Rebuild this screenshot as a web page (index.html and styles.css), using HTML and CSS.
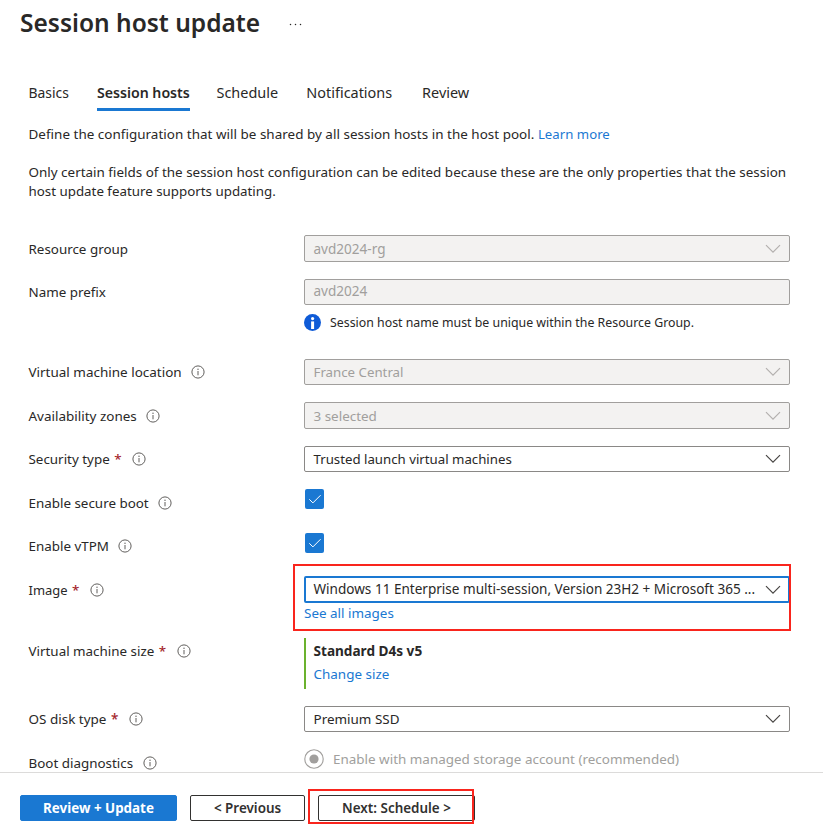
FILE: index.html
```
<!DOCTYPE html>
<html lang="en">
<head>
<meta charset="utf-8">
<title>Session host update</title>
<link rel="stylesheet" href="styles.css">
</head>
<body>
<svg class="defs" width="0" height="0" aria-hidden="true">
  <symbol id="info" viewBox="0 0 14 14"><circle cx="7" cy="7" r="6.1" fill="none" stroke="#605e5c" stroke-width="1"/><path d="M7 6v4.3" stroke="#605e5c" stroke-width="1"/><circle cx="7" cy="4.2" r=".7" fill="#605e5c"/></symbol>
  <symbol id="chevron" viewBox="0 0 16 10"><path d="M1 1.2l7 7 7-7" fill="none" stroke="currentColor" stroke-width="1.2"/></symbol>
  <symbol id="check" viewBox="0 0 19 20"><path d="M4.3 10.3l3.6 3.6 7.7-7.7" fill="none" stroke="#fff" stroke-width="1"/></symbol>
</svg>
<div class="page">
  <header class="header">
    <h1 class="title">Session host update</h1>
    <svg class="more" width="13" height="3" viewBox="0 0 13 3"><circle cx="1.5" cy="1.5" r=".75"/><circle cx="6.5" cy="1.5" r=".75"/><circle cx="11.5" cy="1.5" r=".75"/></svg>
  </header>
  <main class="content">
    <nav class="tabs">
      <span class="tab tab-basics">Basics</span>
      <span class="tab tab-active">Session hosts</span>
      <span class="tab">Schedule</span>
      <span class="tab">Notifications</span>
      <span class="tab tab-review">Review</span>
    </nav>
    <p class="intro">Define the configuration that will be shared by all session hosts in the host pool. <a class="link">Learn more</a></p>
    <p class="note">Only certain fields of the session host configuration can be edited because these are the only properties that the session<br><span class="note-end">host update feature supports updating.</span></p>

    <div class="form">
      <div class="row row-group">
        <div class="label drop">Resource group</div>
        <div class="select tall disabled"><span class="value w-rg">avd2024-rg</span><svg class="chevron"><use href="#chevron"/></svg></div>
      </div>
      <div class="row row-prefix">
        <div class="label">Name prefix</div>
        <div>
          <div class="select disabled input"><span class="value w-rg">avd2024</span></div>
          <div class="hint">
            <svg width="17" height="17" viewBox="0 0 17 17"><circle cx="8.5" cy="8.5" r="8.5" fill="#0f5bd7"/><circle cx="8.6" cy="4.6" r="1.6" fill="#fff"/><path d="M7.1 7.4h3v7.6h-3z" fill="#fff"/></svg>
            <span>Session host name must be unique within the Resource Group.</span>
          </div>
        </div>
      </div>
      <div class="row row-location">
        <div class="label w-loc">Virtual machine location<svg class="info"><use href="#info"/></svg></div>
        <div class="select disabled"><span class="value w-fr">France Central</span><svg class="chevron"><use href="#chevron"/></svg></div>
      </div>
      <div class="row row-zones">
        <div class="label drop w-loc">Availability zones<svg class="info"><use href="#info"/></svg></div>
        <div class="select tall disabled"><span class="value">3 selected</span><svg class="chevron"><use href="#chevron"/></svg></div>
      </div>
      <div class="row row-security">
        <div class="label">Security type<b class="req">*</b><svg class="info"><use href="#info"/></svg></div>
        <div class="select"><span class="value w-launch">Trusted launch virtual machines</span><svg class="chevron"><use href="#chevron"/></svg></div>
      </div>
      <div class="row row-boot">
        <div class="label drop">Enable secure boot<svg class="info"><use href="#info"/></svg></div>
        <svg class="checkbox"><use href="#check"/></svg>
      </div>
      <div class="row row-vtpm">
        <div class="label">Enable vTPM<svg class="info"><use href="#info"/></svg></div>
        <svg class="checkbox"><use href="#check"/></svg>
      </div>
      <div class="row row-image">
        <div class="label drop"><span class="w-image">Image</span><b class="req">*</b><svg class="info"><use href="#info"/></svg></div>
        <div class="image-field">
          <div class="select tall focused"><span class="value w-win">Windows 11 Enterprise multi-session, Version 23H2 + Microsoft 365 ...</span><svg class="chevron"><use href="#chevron"/></svg></div>
          <a class="link see-all">See all images</a>
          <div class="mark mark-image"></div>
        </div>
      </div>
      <div class="row row-size">
        <div class="label">Virtual machine size<b class="req">*</b><svg class="info"><use href="#info"/></svg></div>
        <div class="size">
          <strong class="size-name">Standard D4s v5</strong>
          <a class="link">Change size</a>
        </div>
      </div>
      <div class="row row-disk">
        <div class="label w-disk">OS disk type<b class="req">*</b><svg class="info"><use href="#info"/></svg></div>
        <div class="select"><span class="value">Premium SSD</span><svg class="chevron"><use href="#chevron"/></svg></div>
      </div>
      <div class="row row-diag">
        <div class="label drop">Boot diagnostics<svg class="info"><use href="#info"/></svg></div>
        <div class="radio">
          <svg width="20" height="20" viewBox="0 0 20 20"><circle cx="10" cy="10" r="9.2" fill="none" stroke="#a19f9d" stroke-width="1.1"/><circle cx="10" cy="10" r="4.6" fill="#a19f9d"/></svg>
          <span>Enable with managed storage account (recommended)</span>
        </div>
      </div>
    </div>
  </main>
  <footer class="footer">
    <button class="btn btn-primary">Review + Update</button>
    <button class="btn btn-prev">&lt; Previous</button>
    <div class="next">
      <button class="btn btn-next">Next: Schedule &gt;</button>
      <div class="mark mark-next"></div>
    </div>
  </footer>
</div>
</body>
</html>
```
FILE: styles.css
```
* { box-sizing: border-box; }
body {
  margin: 0;
  background: #fff;
  color: #292827;
  font: 13.44px/19px "Noto Sans", "Open Sans", sans-serif;
}
.defs { position: absolute; }
.page { display: flex; flex-direction: column; width: 823px; height: 833px; overflow: hidden; }

.header { display: flex; align-items: center; height: 46px; padding-left: 20px; flex: none; }
.title { margin: 0; font-size: 24.5px; line-height: 46px; font-weight: 600; white-space: nowrap; width: 269px; }
.more { fill: #292827; margin-top: 2px; }

.content { height: 726px; flex: none; overflow: hidden; padding-left: 28.5px; }
.tabs { display: flex; gap: 26.7px; padding-top: 35px; font-size: 14.45px; }
.tab { height: 30px; line-height: 24px; white-space: nowrap; }
.tab:nth-child(n+4) { margin-left: 1.5px; }
.tab-basics { font-size: 13.9px; margin-right: 1.3px; }
.tab-active { font-size: 14.16px; font-weight: 600; border-bottom: 3px solid #1a78d2; }
.tab.tab-review { margin-left: 3.2px; }
.intro { margin: 14px 0 0; white-space: nowrap; letter-spacing: .023px; }
.note { margin: 19px 0 0; white-space: nowrap; }
.note-end { font-size: 13.33px; }
.link { color: #1a78d2; }
.intro .link { font-size: 13.2px; }

.form { padding-top: 34px; }
.row { display: grid; grid-template-columns: 275.5px 486px; align-items: start; }
.row-group, .row-zones, .row-boot { height: 44px; }
.row-prefix { height: 80px; }
.row-location, .row-security, .row-vtpm, .row-disk { height: 43px; }
.row-image { height: 62px; }
.row-size { height: 68px; }

.label { display: flex; align-items: center; height: 27px; white-space: nowrap; font-size: 13.4px; }
.drop { padding-top: 1px; height: 28px; }
.w-loc, .w-disk { font-size: 13.48px; }
.w-image { font-size: 12.95px; }
.req { color: #a4262c; font-weight: 500; margin-left: 4.5px; }
.info { width: 14px; height: 14px; margin-left: 9.5px; margin-top: -1px; }
.req + .info { margin-left: 10.5px; }

.select {
  display: flex; align-items: center; justify-content: space-between;
  height: 26px; padding: 0 8px 0 8.5px;
  border: 1px solid #8a8886; border-radius: 2px; background: #fff;
}
.tall { height: 27px; }
.tall.disabled .value { padding-top: 1px; }
.disabled { background: #f3f2f1; border-color: #a19f9d; color: #a19f9d; }
.focused { border: 2px solid #1a78d2; padding: 0 7px 0 7.5px; }
.value { white-space: nowrap; }
.input .value { margin-top: -2px; }
.chevron { width: 16px; height: 10px; color: #484644; }
.disabled .chevron { color: #b3b0ae; }
.value.w-rg { font-size: 13.55px; }
.w-fr { font-size: 13.27px; }
.w-launch { font-size: 13.24px; }
.w-win { font-size: 13.55px; }
.hint { display: flex; align-items: center; gap: 9px; margin-top: 9px; height: 17px; font-size: 12.35px; white-space: nowrap; }

.checkbox { width: 19px; height: 20px; margin-left: 1px; background: #1a78d2; border-radius: 2px; }
.image-field { position: relative; }
.see-all { display: block; margin-top: 1px; }
.mark { position: absolute; border: 2px solid #f9251d; }
.mark-image { left: -11px; top: -12px; width: 498px; height: 67px; }

.size { display: flex; flex-direction: column; gap: 5px; height: 51px; border-left: 2px solid #6bb22e; padding: 3px 0 0 7.5px; }
.size-name { font-size: 13.6px; }
.radio { display: flex; align-items: center; gap: 9px; height: 20px; color: #a19f9d; white-space: nowrap; }

.footer { display: flex; flex: 1; align-items: flex-start; border-top: 1px solid #dcdbda; padding: 22px 0 0 20px; background: #fff; }
.btn { height: 26px; padding: 0 0 1px; border: 1px solid #323130; border-radius: 2px; background: #fff; color: #323130; font: 600 13.45px/22px "Noto Sans", "Open Sans", sans-serif; white-space: nowrap; }
.btn-primary { width: 157px; background: #1a78d2; border-color: #1a78d2; color: #fff; font-weight: 700; font-size: 13.4px; }
.btn-prev { width: 115px; margin-left: 13px; }
.next { position: relative; margin-left: 13px; }
.btn-next { display: block; width: 157px; }
.mark-next { left: -10px; top: -6px; width: 166px; height: 35px; }
```
